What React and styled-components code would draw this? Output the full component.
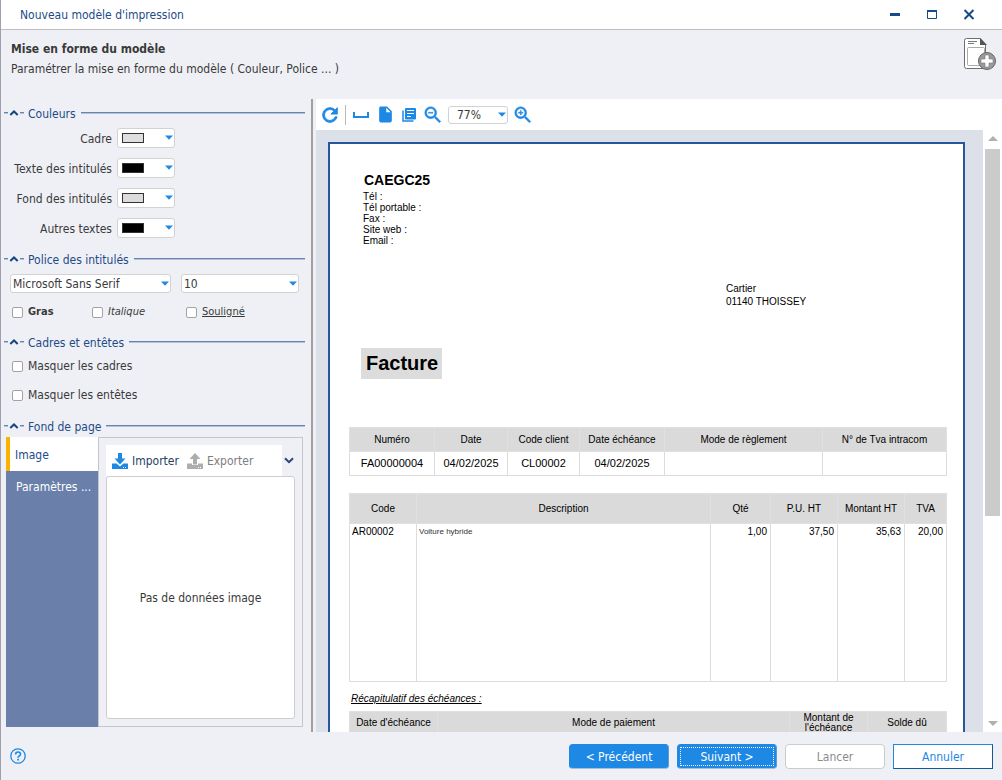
import React from "react";
import styled, { createGlobalStyle, css } from "styled-components";
import {
  MdRefresh,
  MdSpaceBar,
  MdInsertDriveFile,
  MdZoomOut,
  MdZoomIn,
} from "react-icons/md";

const colorRows = [
  { id: "cadre", label: "Cadre", name: "Gris clair", value: "#dfdfdf" },
  { id: "texte", label: "Texte des intitulés", name: "Noir", value: "#000000" },
  { id: "fond", label: "Fond des intitulés", name: "Gris clair", value: "#dcdcdc" },
  { id: "autres", label: "Autres textes", name: "Noir", value: "#000000" },
];

const contactLines = ["Tél :", "Tél portable :", "Fax :", "Site web :", "Email :"];

const invoiceInfo = [
  { head: "Numéro", value: "FA00000004", width: 85 },
  { head: "Date", value: "04/02/2025", width: 73 },
  { head: "Code client", value: "CL00002", width: 72 },
  { head: "Date échéance", value: "04/02/2025", width: 85 },
  { head: "Mode de règlement", value: "" },
  { head: "N° de Tva intracom", value: "", width: 124 },
];

const invoiceLines = [
  { head: "Code", value: "AR00002", width: 67 },
  { head: "Description", value: "Voiture hybride", small: true },
  { head: "Qté", value: "1,00", width: 60, right: true },
  { head: "P.U. HT", value: "37,50", width: 67, right: true },
  { head: "Montant HT", value: "35,63", width: 67, right: true },
  { head: "TVA", value: "20,00", width: 42, right: true },
];

const dueColumns = [
  { head: "Date d'échéance", width: 88 },
  { head: "Mode de paiement" },
  { head: "Montant de l'échéance", width: 78 },
  { head: "Solde dû", width: 79 },
];

const Caret = () => (
  <CaretIcon width="8" height="5" viewBox="0 0 8 5" aria-hidden="true">
    <path d="M0 0.500h8L4 4.800z" fill="#1e88e5" />
  </CaretIcon>
);

const Section = ({ title, children }) => (
  <section>
    <SectionHeader>
      <Dash />
      <FoldButton type="button" aria-label={title}>
        <svg width="10" height="6" viewBox="0 0 10 6">
          <path d="M1.3 5L5 1.5 8.7 5" fill="none" stroke="#174580" strokeWidth="2" />
        </svg>
      </FoldButton>
      <Dash />
      <SectionTitle>{title}</SectionTitle>
      <SectionLine />
    </SectionHeader>
    {children}
  </section>
);

const DocumentAddIcon = () => (
  <svg width="34" height="34" viewBox="0 0 34 34" aria-hidden="true">
    <path
      d="M3.500 1.500h14l5 6v24h-19a2 2 0 0 1-2-2v-26a2 2 0 0 1 2-2z"
      fill="#fff"
      stroke="#6e6e6e"
    />
    <path d="M17 1l7 7h-7z" fill="#555" />
    <path d="M5 4.500h9M5 6.500h6" stroke="#777" />
    <rect x="4.500" y="10.500" width="17" height="18" rx="1" fill="#fff" stroke="#aaa" />
    <circle cx="24" cy="24" r="8.500" fill="#9a9a9a" stroke="#666" />
    <path
      d="M22 18h4v4h4v4h-4v4h-4v-4h-4v-4h4z"
      fill="#fff"
      stroke="#777"
      strokeWidth="0.600"
    />
  </svg>
);

const PagesIcon = () => (
  <svg width="14" height="14" viewBox="0 0 14 14" aria-hidden="true">
    <path d="M1 2.500V13h10.500" fill="none" stroke="currentColor" strokeWidth="1.500" />
    <rect x="3" width="11" height="11.500" rx="1" fill="currentColor" />
    <path d="M5 2.500h7M5 5.500h7M5 8.500h4" stroke="#fff" strokeWidth="1.200" />
  </svg>
);

const TrayIcon = ({ up, color }) => (
  <svg width="16" height="16" viewBox="0 0 16 16" aria-hidden="true">
    <path
      d={up ? "M0 10.500h5v1.500h6v-1.500h5V16H0z" : "M0 10.500h4.500L8 13.500l3.500-3H16V16H0z"}
      fill={color}
    />
    <path
      d={up ? "M8 0l5.500 6H10v5.500H6V6H2.500z" : "M6 0h4v5.500h3.500L8 11.500 2.500 5.500H6z"}
      fill={color}
    />
    <path d="M11 14.500h1M13 14.500h1" stroke="#fff" />
  </svg>
);

const App = () => {
  return (
    <Window>
      <GlobalStyle />
      <TitleBar>
        <span>Nouveau modèle d'impression</span>
        <WindowActions>
          <WindowButton type="button" aria-label="Réduire">
            <svg width="12" height="12" viewBox="0 0 12 12">
              <path d="M1 5.500h10" stroke="#174a86" strokeWidth="3" />
            </svg>
          </WindowButton>
          <WindowButton type="button" aria-label="Agrandir">
            <svg width="12" height="12" viewBox="0 0 12 12">
              <path d="M1.500 2v7.500h9V2" fill="none" stroke="#174a86" />
              <path d="M1 2h10" stroke="#174a86" strokeWidth="2" />
            </svg>
          </WindowButton>
          <WindowButton type="button" aria-label="Fermer">
            <svg width="12" height="12" viewBox="0 0 12 12">
              <path d="M1.500 1l9 9M10.500 1l-9 9" stroke="#174a86" strokeWidth="2" />
            </svg>
          </WindowButton>
        </WindowActions>
      </TitleBar>

      <Header>
        <div>
          <HeaderTitle>Mise en forme du modèle</HeaderTitle>
          <HeaderText>
            Paramétrer la mise en forme du modèle ( Couleur, Police ... )
          </HeaderText>
        </div>
        <DocumentAddIcon />
      </Header>

      <Body>
        <Sidebar>
          <Section title="Couleurs">
            <ColorList>
              {colorRows.map((x) => (
                <ColorRow key={x.id}>
                  <ColorLabel htmlFor={x.id}>{x.label}</ColorLabel>
                  <SelectBox $height={20} $width={58}>
                    <Select id={x.id} defaultValue={x.value}>
                      <option value={x.value} aria-label={x.name} />
                    </Select>
                    <Swatch $color={x.value} />
                    <Caret />
                  </SelectBox>
                </ColorRow>
              ))}
            </ColorList>
          </Section>

          <Section title="Police des intitulés">
            <FontRow>
              <SelectBox $height={19} $grow={161}>
                <Select aria-label="Police">
                  <option>Microsoft Sans Serif</option>
                </Select>
                <Caret />
              </SelectBox>
              <SelectBox $height={19} $grow={118}>
                <Select aria-label="Taille">
                  <option>10</option>
                </Select>
                <Caret />
              </SelectBox>
            </FontRow>
            <StyleRow>
              <CheckLabel $look="bold">
                <Checkbox type="checkbox" />
                <span>Gras</span>
              </CheckLabel>
              <CheckLabel $look="italic">
                <Checkbox type="checkbox" />
                <span>Italique</span>
              </CheckLabel>
              <CheckLabel $look="underline">
                <Checkbox type="checkbox" />
                <span>Souligné</span>
              </CheckLabel>
            </StyleRow>
          </Section>

          <Section title="Cadres et entêtes">
            <CheckList>
              <CheckLabel>
                <Checkbox type="checkbox" />
                <span>Masquer les cadres</span>
              </CheckLabel>
              <CheckLabel>
                <Checkbox type="checkbox" />
                <span>Masquer les entêtes</span>
              </CheckLabel>
            </CheckList>
          </Section>

          <Section title="Fond de page">
            <TabPanel>
              <TabList role="tablist">
                <Tab type="button" role="tab" aria-selected="true" $active>
                  Image
                </Tab>
                <Tab type="button" role="tab" aria-selected="false">
                  Paramètres ...
                </Tab>
              </TabList>
              <TabContent>
                <ImageToolbar>
                  <ImageActions>
                    <ImageButton type="button">
                      <TrayIcon color="#1e88e5" />
                      Importer
                    </ImageButton>
                    <ImageButton type="button" disabled>
                      <TrayIcon up color="#adadad" />
                      Exporter
                    </ImageButton>
                  </ImageActions>
                  <MoreButton type="button" aria-label="Plus d'options">
                    <svg width="10" height="7" viewBox="0 0 10 7">
                      <path d="M1 1.200l4 4 4-4" fill="none" stroke="#2a4480" strokeWidth="2" />
                    </svg>
                  </MoreButton>
                </ImageToolbar>
                <ImageBox>Pas de données image</ImageBox>
              </TabContent>
            </TabPanel>
          </Section>
        </Sidebar>

        <Splitter />

        <Preview>
          <PreviewToolbar>
            <IconButton type="button" aria-label="Actualiser" $weight={1}>
              <MdRefresh size={22} />
            </IconButton>
            <Separator />
            <IconButton type="button" aria-label="Largeur de page">
              <MdSpaceBar size={24} />
            </IconButton>
            <IconButton type="button" aria-label="Page entière">
              <MdInsertDriveFile size={19} />
            </IconButton>
            <IconButton type="button" aria-label="Plusieurs pages">
              <PagesIcon />
            </IconButton>
            <IconButton type="button" aria-label="Zoom arrière" $weight={0.5}>
              <MdZoomOut size={22} />
            </IconButton>
            <ZoomBox $height={18} $width={60}>
              <Select aria-label="Zoom" $indent={8}>
                <option>77%</option>
              </Select>
              <Caret />
            </ZoomBox>
            <IconButton type="button" aria-label="Zoom avant" $weight={0.5}>
              <MdZoomIn size={22} />
            </IconButton>
          </PreviewToolbar>

          <Viewer>
            <Desk>
              <Paper>
                <Company>CAEGC25</Company>
                <Contact>
                  {contactLines.map((x) => (
                    <div key={x}>{x}</div>
                  ))}
                </Contact>
                <Address>
                  <div>Cartier</div>
                  <div>01140 THOISSEY</div>
                </Address>
                <DocTitle>Facture</DocTitle>

                <InfoTable>
                  <colgroup>
                    {invoiceInfo.map((x) => (
                      <col key={x.head} width={x.width} />
                    ))}
                  </colgroup>
                  <thead>
                    <tr>
                      {invoiceInfo.map((x) => (
                        <th key={x.head}>{x.head}</th>
                      ))}
                    </tr>
                  </thead>
                  <tbody>
                    <tr>
                      {invoiceInfo.map((x) => (
                        <td key={x.head}>{x.value}</td>
                      ))}
                    </tr>
                  </tbody>
                </InfoTable>

                <LinesTable>
                  <colgroup>
                    {invoiceLines.map((x) => (
                      <col key={x.head} width={x.width} />
                    ))}
                  </colgroup>
                  <thead>
                    <tr>
                      {invoiceLines.map((x) => (
                        <th key={x.head}>{x.head}</th>
                      ))}
                    </tr>
                  </thead>
                  <tbody>
                    <tr>
                      {invoiceLines.map((x) => (
                        <LineCell key={x.head} $right={x.right} $small={x.small}>
                          {x.value}
                        </LineCell>
                      ))}
                    </tr>
                  </tbody>
                </LinesTable>

                <Recap>Récapitulatif des échéances :</Recap>
                <DueTable>
                  <colgroup>
                    {dueColumns.map((x) => (
                      <col key={x.head} width={x.width} />
                    ))}
                  </colgroup>
                  <thead>
                    <tr>
                      {dueColumns.map((x) => (
                        <th key={x.head}>{x.head}</th>
                      ))}
                    </tr>
                  </thead>
                </DueTable>
              </Paper>
            </Desk>
            <Scrollbar>
              <svg width="10" height="5" viewBox="0 0 10 5">
                <path d="M0 5l5-5 5 5z" fill="#b0b0b0" />
              </svg>
              <ScrollTrack>
                <ScrollThumb />
              </ScrollTrack>
              <svg width="10" height="5" viewBox="0 0 10 5">
                <path d="M0 0l5 5 5-5z" fill="#b0b0b0" />
              </svg>
            </Scrollbar>
          </Viewer>
        </Preview>
      </Body>

      <Footer>
        <HelpButton type="button" aria-label="Aide">
          <svg width="16" height="16" viewBox="0 0 16 16">
            <circle cx="8" cy="8" r="7.200" fill="none" stroke="#1e88e5" strokeWidth="1.300" />
            <path
              d="M5.600 6.400C5.600 4.900 6.600 4 8 4s2.500.9 2.500 2.200C10.500 7.800 8 7.900 8 9.700"
              fill="none"
              stroke="#1e88e5"
              strokeWidth="1.600"
            />
            <path d="M7.200 10.800h1.700v1.600H7.200z" fill="#1e88e5" />
          </svg>
        </HelpButton>
        <FooterActions>
          <Button type="button" $kind="primary">
            &lt; Précédent
          </Button>
          <Button type="button" $kind="primary" $focused>
            Suivant &gt;
          </Button>
          <Button type="button" disabled>
            Lancer
          </Button>
          <Button type="button" $kind="outline">
            Annuler
          </Button>
        </FooterActions>
      </Footer>
    </Window>
  );
};

const GlobalStyle = createGlobalStyle`
  * {
    box-sizing: border-box;
  }
  body {
    margin: 0;
    background: #eff0f5;
    color: #3a3a3a;
    font-family: "DejaVu Sans Condensed", "DejaVu Sans", sans-serif;
    font-size: 12px;
    line-height: 16px;
  }
  button,
  select {
    font: inherit;
    color: inherit;
  }
  button {
    display: flex;
    align-items: center;
    justify-content: center;
    padding: 0;
    border: 0;
    background: none;
  }
  svg {
    flex: none;
  }
`;

const Window = styled.div`
  display: flex;
  flex-direction: column;
  height: 100vh;
  border-left: 1px solid #a09fb0;
  overflow: hidden;
`;

const TitleBar = styled.div`
  display: flex;
  align-items: center;
  justify-content: space-between;
  height: 30px;
  padding: 0 15px 0 19px;
  background: #fff;
  border-bottom: 1px solid #bdbdbd;
  color: #1d4b88;
`;

const WindowActions = styled.div`
  display: flex;
`;

const WindowButton = styled.button`
  width: 37px;
  height: 28px;
`;

const Header = styled.header`
  display: flex;
  justify-content: space-between;
  height: 69px;
  padding: 7px 5px 0 10px;
`;

const HeaderTitle = styled.h1`
  margin: 4px 0;
  font-size: 12px;
  font-weight: 700;
`;

const HeaderText = styled.p`
  margin: 0;
`;

const Body = styled.div`
  display: flex;
  flex: 1;
  min-height: 0;
`;

const Sidebar = styled.aside`
  display: flex;
  flex-direction: column;
  flex: none;
  width: 310px;
  padding: 5px 6px 5px 3px;
  section:last-child {
    display: flex;
    flex-direction: column;
    flex: 1;
  }
`;

const Splitter = styled.div`
  flex: none;
  width: 2px;
  margin-right: 3px;
  background: #a39f9f;
`;

const SectionHeader = styled.div`
  display: flex;
  align-items: center;
  height: 18px;
`;

const Dash = styled.span`
  width: 4px;
  height: 2px;
  border-top: 1px solid #6583b3;
  border-bottom: 1px solid #b4c2da;
`;

const FoldButton = styled.button`
  width: 12px;
  height: 10px;
`;

const SectionTitle = styled.h2`
  margin: 0 5px 0 4px;
  padding-top: 2px;
  font-size: 12px;
  font-weight: 400;
  color: #1d4b88;
`;

const SectionLine = styled.span`
  flex: 1;
  height: 2px;
  border-top: 1px solid #6583b3;
  border-bottom: 1px solid #b4c2da;
`;

const ColorList = styled.div`
  display: flex;
  flex-direction: column;
  gap: 10px;
  padding: 6px 0 12px;
`;

const ColorRow = styled.div`
  display: flex;
  align-items: center;
  gap: 5px;
`;

const ColorLabel = styled.label`
  width: 108px;
  padding-top: 2px;
  text-align: right;
  white-space: nowrap;
`;

const SelectBox = styled.div`
  position: relative;
  flex: ${(p) => (p.$grow ? `${p.$grow} 1 0` : "none")};
  width: ${(p) => p.$width}px;
  height: ${(p) => p.$height}px;
`;

const Select = styled.select`
  appearance: none;
  display: block;
  width: 100%;
  height: 100%;
  padding: 0 14px 0 ${(p) => p.$indent || 2}px;
  border: 1px solid #d2d2d2;
  border-radius: 3px;
  background: #fff;
`;

const CaretIcon = styled.svg`
  position: absolute;
  top: 50%;
  right: 2px;
  margin-top: -3px;
  pointer-events: none;
`;

const Swatch = styled.span`
  position: absolute;
  top: 5px;
  left: 5px;
  width: 22px;
  height: 10px;
  border: 1px solid #333;
  background: ${(p) => p.$color};
  pointer-events: none;
`;

const FontRow = styled.div`
  display: flex;
  gap: 10px;
  padding: 6px 6px 0;
`;

const StyleRow = styled.div`
  display: grid;
  grid-template-columns: 80px 94px auto;
  padding: 11px 8px 13px;
`;

const CheckList = styled.div`
  display: flex;
  flex-direction: column;
  gap: 13px;
  padding: 7px 8px 14px;
`;

const CheckLabel = styled.label`
  display: flex;
  align-items: center;
  gap: 5px;
  ${(p) => p.$look === "bold" && "font-weight: 700; font-size: 11px;"}
  ${(p) => p.$look === "italic" && "font-style: italic; font-size: 11px;"}
  ${(p) =>
    p.$look === "underline" &&
    css`
      font-size: 11px;
      span {
        text-decoration: underline;
      }
    `}
`;

const Checkbox = styled.input`
  appearance: none;
  flex: none;
  width: 11px;
  height: 11px;
  margin: 0;
  border: 1px solid #a3a3a3;
  border-radius: 2px;
  background: #fff;
`;

const TabPanel = styled.div`
  display: flex;
  flex: 1;
  margin: 2px 2px 0;
`;

const TabList = styled.div`
  width: 92px;
  background: #6a80aa;
`;

const Tab = styled.button`
  width: 100%;
  height: 30px;
  justify-content: flex-start;
  padding: 2px 0 0 10px;
  white-space: nowrap;
  color: #fff;
  ${(p) =>
    p.$active &&
    css`
      height: 34px;
      padding-left: 5px;
      border-left: 4px solid #f9b200;
      background: #fff;
      color: #1d4b88;
    `}
`;

const TabContent = styled.div`
  display: flex;
  flex-direction: column;
  flex: 1;
  padding: 7px;
  border: 1px solid #c6c6c6;
`;

const ImageToolbar = styled.div`
  display: flex;
  height: 31px;
`;

const ImageActions = styled.div`
  display: flex;
  gap: 8px;
  flex: 1;
  padding-left: 6px;
  background: #fff;
`;

const ImageButton = styled.button`
  gap: 4px;
  color: #1f3f68;
  &:disabled {
    color: #7d7d7d;
  }
`;

const MoreButton = styled.button`
  width: 13px;
`;

const ImageBox = styled.div`
  display: flex;
  flex: 1;
  align-items: center;
  justify-content: center;
  border: 1px solid #cecece;
  border-radius: 3px;
  background: #fff;
`;

const Preview = styled.main`
  display: flex;
  flex-direction: column;
  flex: 1;
  min-width: 0;
`;

const PreviewToolbar = styled.div`
  display: flex;
  flex: none;
  align-items: center;
  height: 31px;
  padding-left: 2px;
  background: #fff;
`;

const IconButton = styled.button`
  width: 24px;
  height: 24px;
  color: #1e88e5;
  ${(p) =>
    p.$weight &&
    css`
      path:not([fill="none"]) {
        stroke-width: ${p.$weight};
      }
    `}
`;

const Separator = styled.span`
  width: 1px;
  height: 20px;
  margin: 0 3px;
  background: #b8b8b8;
`;

const ZoomBox = styled(SelectBox)`
  margin: 0 3px;
`;

const Viewer = styled.div`
  display: flex;
  flex: 1;
  min-height: 0;
`;

const Desk = styled.div`
  flex: 1;
  padding: 12px 18px 0 12px;
  background: #dce1e9;
  overflow: hidden;
`;

const Paper = styled.article`
  min-height: 900px;
  padding: 27px 16px 40px 19px;
  border: 2px solid #28559b;
  background: #fff;
  color: #000;
  font-family: "Liberation Sans", Arial, sans-serif;
  font-size: 10px;
  line-height: 11px;
`;

const Company = styled.h2`
  margin: 0 0 2px 15px;
  font-size: 14px;
  line-height: 18px;
`;

const Contact = styled.div`
  margin-left: 14px;
`;

const Address = styled.div`
  width: 221px;
  margin: 36px 0 40px auto;
  line-height: 13px;
`;

const DocTitle = styled.h1`
  width: fit-content;
  margin: 0 0 48px 12px;
  padding: 0 4px 0 5px;
  background: #dcdcdc;
  font-size: 20px;
  line-height: 31px;
`;

const Table = styled.table`
  width: 100%;
  table-layout: fixed;
  border-collapse: collapse;
  th {
    padding: 0 1px;
    border: 1px solid #e0e0e0;
    background: #dadada;
    font-weight: 400;
  }
  td {
    border: 1px solid #dcdcdc;
  }
`;

const InfoTable = styled(Table)`
  margin-bottom: 17px;
  th,
  td {
    height: 24px;
    padding: 0;
    text-align: center;
  }
  td {
    font-size: 11px;
  }
`;

const LinesTable = styled(Table)`
  th {
    height: 30px;
  }
`;

const LineCell = styled.td`
  height: 158px;
  padding: 2px 3px 0 2px;
  vertical-align: top;
  text-align: ${(p) => (p.$right ? "right" : "left")};
  font-size: ${(p) => (p.$small ? 8 : 10)}px;
  color: ${(p) => (p.$small ? "#333" : "#000")};
`;

const Recap = styled.p`
  margin: 10px 0 5px 2px;
  font-style: italic;
  line-height: 14px;
  text-decoration: underline;
`;

const DueTable = styled(Table)`
  th {
    height: 22px;
    line-height: 10px;
  }
`;

const Scrollbar = styled.div`
  display: flex;
  flex-direction: column;
  align-items: center;
  flex: none;
  width: 19px;
  padding: 6px 0 6px;
  background: #fff;
`;

const ScrollTrack = styled.div`
  flex: 1;
  padding: 8px 0;
`;

const ScrollThumb = styled.div`
  width: 15px;
  height: 65%;
  background: #cbcbcb;
`;

const Footer = styled.footer`
  display: flex;
  flex: none;
  align-items: center;
  justify-content: space-between;
  height: 48px;
  padding: 0 9px;
`;

const HelpButton = styled.button`
  width: 16px;
  height: 16px;
`;

const FooterActions = styled.div`
  display: flex;
  gap: 8px;
`;

const Button = styled.button`
  width: 100px;
  height: 25px;
  padding-top: 2px;
  border: 1px solid #cbcbcb;
  border-radius: 4px;
  background: #fff;
  color: #8b8b8b;
  ${(p) =>
    p.$kind === "primary" &&
    css`
      border-color: #1e88e5 #5e9bd3 #a9bfd4 #1e88e5;
      background: #1e88e5;
      color: #fff;
    `}
  ${(p) =>
    p.$kind === "outline" &&
    css`
      border-color: #1e88e5 #0f5a9c #0f5a9c #1e88e5;
      border-radius: 0;
      color: #1e88e5;
    `}
  ${(p) =>
    p.$focused &&
    css`
      outline: 1px dotted #fff;
      outline-offset: -4px;
    `}
`;

export default App;
